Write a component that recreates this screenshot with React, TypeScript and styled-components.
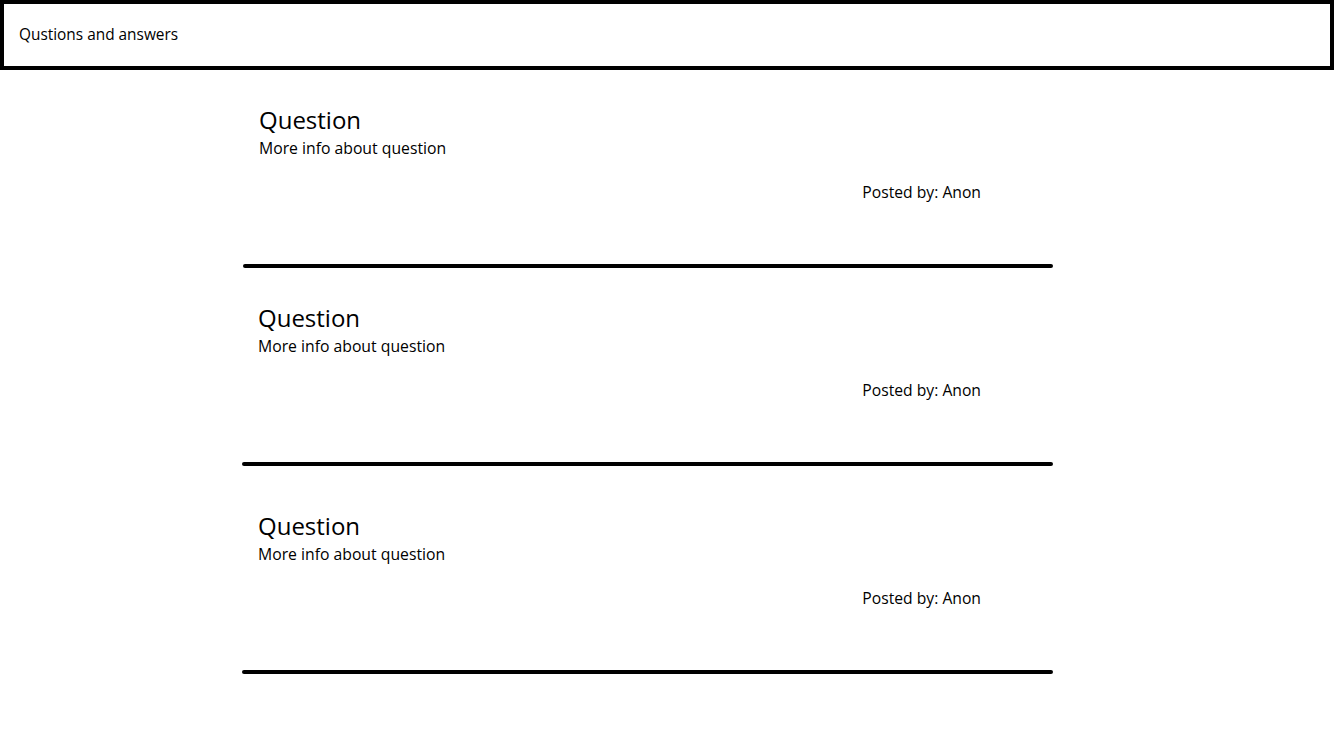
import React from "react";
import styled, { createGlobalStyle } from "styled-components";

const Global = createGlobalStyle`
  html, body { margin: 0; padding: 0; background: #fff; }
  body { font-family: "Open Sans", "Noto Sans", sans-serif; color: #000; }
  * { box-sizing: border-box; }
`;

const Header = styled.header`
  height: 70px;
  width: 1334px;
  border: 4px solid #000;
  display: flex;
  align-items: center;
  padding-left: 15px;
`;

const Brand = styled.span`
  font-size: 15.4px;
  line-height: 20px;
  margin-top: -1px;
`;

const Feed = styled.main`
  width: 811px;
  margin-left: 242px;
  display: flex;
  flex-direction: column;
`;

const Item = styled.article<{ $top: number; $shift?: number }>`
  display: flex;
  flex-direction: column;
  padding-top: ${(p) => p.$top}px;
  margin-left: ${(p) => p.$shift ?? 0}px;
`;

const Body = styled.div`
  padding-left: 16px;
  padding-right: 72px;
  display: flex;
  flex-direction: column;
`;

const Title = styled.h2`
  margin: 0;
  font-weight: 400;
  font-size: 24px;
  line-height: 28px;
`;

const Desc = styled.p`
  margin: 3px 0 0;
  font-size: 15.75px;
  line-height: 22px;
`;

const Meta = styled.div`
  align-self: flex-end;
  margin-top: 23px;
  font-size: 15.7px;
  line-height: 20px;
`;

const Divider = styled.hr`
  margin: 62px 0 0;
  height: 4px;
  border: 0;
  border-radius: 2px;
  background: #000;
`;

const items = [
  { top: 36, shift: 1 },
  { top: 36 },
  { top: 46 },
];

export default function App() {
  return (
    <>
      <Global />
      <Header>
        <Brand>Qustions and answers</Brand>
      </Header>
      <Feed>
        {items.map((it, i) => (
          <Item key={i} $top={it.top} $shift={it.shift}>
            <Body>
              <Title>Question</Title>
              <Desc>More info about question</Desc>
              <Meta>Posted by: Anon</Meta>
            </Body>
            <Divider />
          </Item>
        ))}
      </Feed>
    </>
  );
}
